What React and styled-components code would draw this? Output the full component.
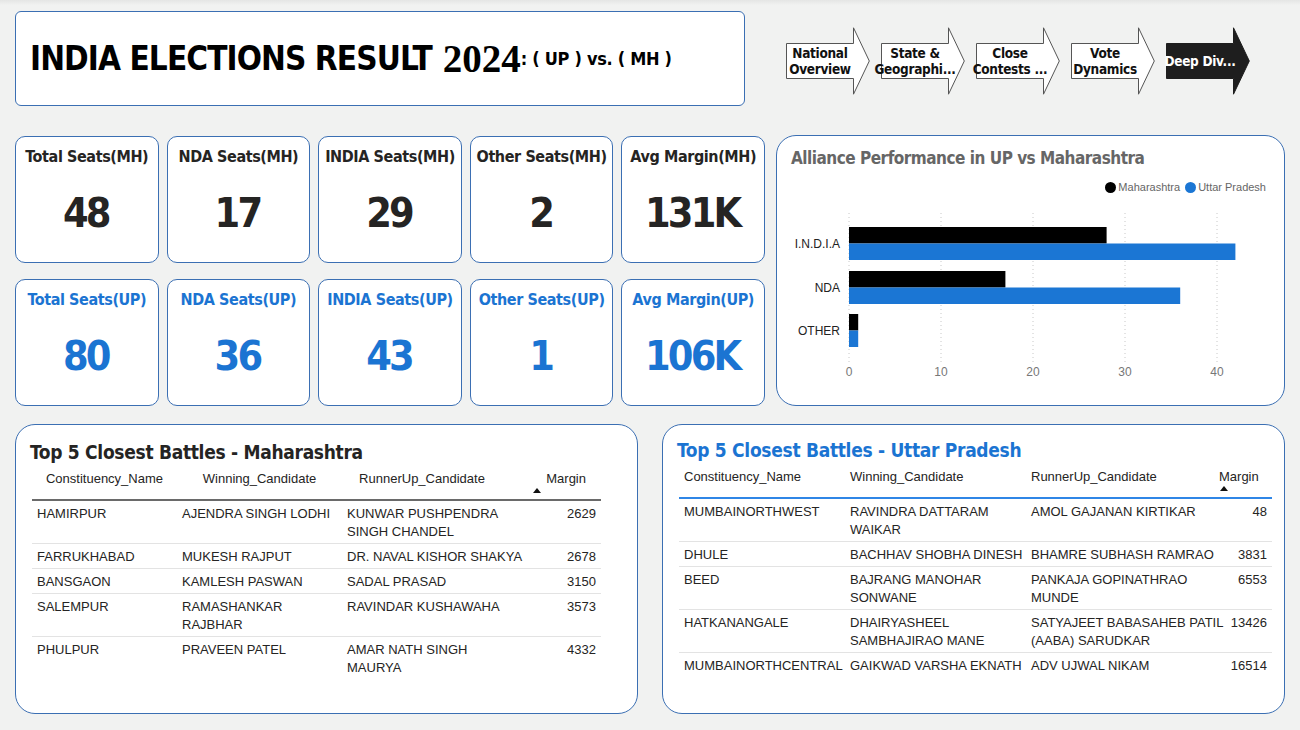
import React from 'react';
import styled, { createGlobalStyle } from 'styled-components';

const BLUE = '#1b74d2';
const BORDER = '#3b6fb3';
const INK = '#252423';
const COND = '"DejaVu Sans Condensed", "DejaVu Sans", sans-serif';
const SANS = '"Liberation Sans", Arial, sans-serif';

const Global = createGlobalStyle`
  html, body { margin: 0; padding: 0; }
  body {
    background: linear-gradient(#e4e5e4 0px, #f1f2f1 5px, #f1f2f1 100%);
    font-family: ${SANS};
    color: ${INK};
  }
  * { box-sizing: border-box; }
`;

const Page = styled.div`
  width: 1300px;
  height: 730px;
  padding: 11px 15px 0 15px;
  display: flex;
  flex-direction: column;
`;

const TopRow = styled.div`
  display: flex;
  align-items: flex-start;
  height: 95px;
`;

const TitleCard = styled.div`
  width: 730px;
  height: 95px;
  background: #fff;
  border: 1px solid ${BORDER};
  border-radius: 6px;
  display: flex;
  align-items: center;
  padding-left: 14px;
  white-space: nowrap;
`;

const TitleMain = styled.span`
  font-family: ${COND};
  font-weight: 700;
  font-size: 33px;
  letter-spacing: -0.9px;
  color: #000;
`;

const TitleYear = styled.span`
  font-family: "Liberation Serif", serif;
  font-weight: 700;
  font-size: 39px;
  color: #000;
  margin-left: 11px;
`;

const TitleSub = styled.span`
  font-family: ${COND};
  font-weight: 700;
  font-size: 18px;
  letter-spacing: -0.3px;
  color: #000;
`;

const Nav = styled.div`
  display: flex;
  gap: 11px;
  margin-left: 41px;
  margin-top: 16px;
`;

const ArrowWrap = styled.div`
  position: relative;
  width: 84px;
  height: 68px;
  flex: none;
`;

const ArrowShape = styled.svg`
  position: absolute;
  inset: 0;
`;

const ArrowLabel = styled.div`
  position: relative;
  margin-top: 16px;
  width: 68px;
  height: 36px;
  display: flex;
  align-items: center;
  justify-content: center;
  text-align: center;
  font-family: ${COND};
  font-weight: 700;
  font-size: 13.5px;
  letter-spacing: -0.3px;
  line-height: 16px;
  color: ${(p) => (p.$active ? '#fff' : '#111')};
  white-space: nowrap;
`;

const NavArrow = ({ lines, active }) => (
  <ArrowWrap>
    <ArrowShape width="84" height="68" viewBox="0 0 84 68">
      <polygon
        points="0.5,16.5 67.5,16.5 67.5,0.8 83.3,34 67.5,67.2 67.5,51.5 0.5,51.5"
        fill={active ? '#1e1e1e' : '#fff'}
        stroke={active ? '#1e1e1e' : '#555'}
        strokeWidth="1"
      />
    </ArrowShape>
    <ArrowLabel $active={active}>
      <div>
        {lines.map((l, i) => (
          <div key={i}>{l}</div>
        ))}
      </div>
    </ArrowLabel>
  </ArrowWrap>
);

const MidRow = styled.div`
  display: flex;
  gap: 11px;
  margin-top: 29px;
  height: 271px;
`;

const KpiGrid = styled.div`
  width: 750px;
  flex: none;
  display: grid;
  grid-template-columns: repeat(5, minmax(0, 1fr));
  grid-template-rows: 127px 127px;
  column-gap: 8px;
  row-gap: 16px;
  padding-top: 1px;
`;

const Kpi = styled.div`
  background: #fff;
  border: 1px solid ${BORDER};
  border-radius: 10px;
  display: flex;
  flex-direction: column;
  align-items: center;
  padding-top: 10px;
  color: ${(p) => (p.$up ? BLUE : INK)};
`;

const KpiLabel = styled.div`
  font-family: ${COND};
  font-weight: 700;
  font-size: 16px;
  letter-spacing: -0.4px;
  line-height: 20px;
  white-space: nowrap;
`;

const KpiValue = styled.div`
  font-family: ${COND};
  font-weight: 700;
  font-size: 41px;
  letter-spacing: -2.8px;
  line-height: 48px;
  margin-top: 22px;
  padding-right: 2px;
`;

const ChartCard = styled.div`
  width: 509px;
  height: 271px;
  flex: none;
  background: #fff;
  border: 1px solid ${BORDER};
  border-radius: 20px;
  display: flex;
  flex-direction: column;
  padding-top: 10px;
`;

const ChartTitle = styled.div`
  font-family: ${COND};
  font-weight: 700;
  font-size: 17px;
  letter-spacing: -0.5px;
  line-height: 24px;
  color: #666;
  padding-left: 14px;
`;

const Legend = styled.div`
  display: flex;
  justify-content: flex-end;
  gap: 5px;
  padding-right: 18px;
  margin-top: 10px;
  height: 14px;
  font-size: 11px;
  line-height: 14px;
  color: #666;
`;

const LegendItem = styled.div`
  display: flex;
  align-items: center;
  gap: 2px;
  &::before {
    content: '';
    width: 11px;
    height: 11px;
    border-radius: 50%;
    background: ${(p) => p.$color};
  }
`;

const BottomRow = styled.div`
  display: flex;
  gap: 24px;
  margin-top: 18px;
`;

const TableCard = styled.div`
  width: 624px;
  height: 290px;
  background: #fff;
  border: 1px solid ${BORDER};
  border-radius: 20px;
  padding: ${(p) => (p.$up ? '12px 0 0 14px' : '14px 0 0 14px')};
`;

const TableTitle = styled.div`
  font-family: ${COND};
  font-weight: 700;
  font-size: 19px;
  letter-spacing: -0.3px;
  line-height: 26px;
  color: ${(p) => (p.$up ? BLUE : INK)};
`;

const Table = styled.table`
  width: ${(p) => p.$width}px;
  border-collapse: collapse;
  table-layout: fixed;
  margin-left: 2px;
  font-family: ${SANS};
  font-size: 13px;
  line-height: 18px;
  color: ${INK};
`;

const Th = styled.th`
  position: relative;
  font-weight: 400;
  text-align: ${(p) => p.$align || 'center'};
  padding: 5px 5px 11px 5px;
  vertical-align: top;
  white-space: nowrap;
  border-bottom: 2px solid ${(p) => (p.$up ? '#2f86e6' : '#6a6a6a')};
`;

const SortMark = styled.span`
  position: absolute;
  left: ${(p) => p.$left}px;
  bottom: 6px;
  width: 0;
  height: 0;
  border-left: 4px solid transparent;
  border-right: 4px solid transparent;
  border-bottom: 5px solid #111;
`;

const Td = styled.td`
  padding: 4px 5px 2px 5px;
  vertical-align: top;
  white-space: nowrap;
  text-align: ${(p) => (p.$num ? 'right' : 'left')};
`;

const Tr = styled.tr`
  border-bottom: 1px solid ${(p) => (p.$last ? 'transparent' : '#e3e3e3')};
`;

const Lines = ({ v }) =>
  v.split('|').map((l, i, a) => (
    <React.Fragment key={i}>
      {l}
      {i < a.length - 1 && <br />}
    </React.Fragment>
  ));

const mhRows = [
  ['HAMIRPUR', 'AJENDRA SINGH LODHI', 'KUNWAR PUSHPENDRA|SINGH CHANDEL', '2629'],
  ['FARRUKHABAD', 'MUKESH RAJPUT', 'DR. NAVAL KISHOR SHAKYA', '2678'],
  ['BANSGAON', 'KAMLESH PASWAN', 'SADAL PRASAD', '3150'],
  ['SALEMPUR', 'RAMASHANKAR|RAJBHAR', 'RAVINDAR KUSHAWAHA', '3573'],
  ['PHULPUR', 'PRAVEEN PATEL', 'AMAR NATH SINGH|MAURYA', '4332'],
];

const upRows = [
  ['MUMBAINORTHWEST', 'RAVINDRA DATTARAM|WAIKAR', 'AMOL GAJANAN KIRTIKAR', '48'],
  ['DHULE', 'BACHHAV SHOBHA DINESH', 'BHAMRE SUBHASH RAMRAO', '3831'],
  ['BEED', 'BAJRANG MANOHAR|SONWANE', 'PANKAJA GOPINATHRAO|MUNDE', '6553'],
  ['HATKANANGALE', 'DHAIRYASHEEL|SAMBHAJIRAO MANE', 'SATYAJEET BABASAHEB PATIL|(AABA) SARUDKAR', '13426'],
  ['MUMBAINORTHCENTRAL', 'GAIKWAD VARSHA EKNATH', 'ADV UJWAL NIKAM', '16514'],
];

const BattleTable = ({ up, rows, widths }) => (
  <Table $width={widths.reduce((a, b) => a + b, 0)}>
    <colgroup>
      {widths.map((w, i) => (
        <col key={i} style={{ width: w }} />
      ))}
    </colgroup>
    <thead>
      <tr>
        <Th $up={up} $align={up ? 'left' : 'center'}>Constituency_Name</Th>
        <Th $up={up} $align={up ? 'left' : 'center'}>Winning_Candidate</Th>
        <Th $up={up} $align={up ? 'left' : 'center'}>RunnerUp_Candidate</Th>
        <Th $up={up} $align={up ? 'left' : 'right'} style={up ? undefined : { paddingRight: 15 }}>
          Margin
          <SortMark $left={up ? 6 : 31} />
        </Th>
      </tr>
    </thead>
    <tbody>
      {rows.map((r, i) => (
        <Tr key={i} $last={i === rows.length - 1}>
          <Td><Lines v={r[0]} /></Td>
          <Td><Lines v={r[1]} /></Td>
          <Td><Lines v={r[2]} /></Td>
          <Td $num>{r[3]}</Td>
        </Tr>
      ))}
    </tbody>
  </Table>
);

const mhKpis = [
  ['Total Seats(MH)', '48'],
  ['NDA Seats(MH)', '17'],
  ['INDIA Seats(MH)', '29'],
  ['Other Seats(MH)', '2'],
  ['Avg Margin(MH)', '131K'],
];
const upKpis = [
  ['Total Seats(UP)', '80'],
  ['NDA Seats(UP)', '36'],
  ['INDIA Seats(UP)', '43'],
  ['Other Seats(UP)', '1'],
  ['Avg Margin(UP)', '106K'],
];

const X0 = 72;
const SC = 9.2;
const bars = [
  { label: 'I.N.D.I.A', mh: 28, up: 42, y: 33 },
  { label: 'NDA', mh: 17, up: 36, y: 77 },
  { label: 'OTHER', mh: 1, up: 1, y: 120 },
];

const Chart = () => (
  <svg width="507" height="192" viewBox="0 0 507 192" style={{ display: 'block' }}>
    {[0, 10, 20, 30, 40].map((t) => (
      <g key={t}>
        <line
          x1={X0 + t * SC}
          x2={X0 + t * SC}
          y1="19"
          y2="168"
          stroke="#c8c8c8"
          strokeWidth="1"
          strokeDasharray="1 3"
        />
        <text
          x={X0 + t * SC}
          y="182"
          textAnchor="middle"
          fontFamily='"Liberation Sans", sans-serif'
          fontSize="12"
          fill="#777"
        >
          {t}
        </text>
      </g>
    ))}
    {bars.map((b) => (
      <g key={b.label}>
        <rect x={X0} y={b.y} width={b.mh * SC} height="16.5" fill="#000" />
        <rect x={X0} y={b.y + 16.5} width={b.up * SC} height="16.5" fill="#1b76d4" />
        <text
          x="63"
          y={b.y + 21}
          textAnchor="end"
          fontFamily='"Liberation Sans", sans-serif'
          fontSize="12"
          fill="#222"
        >
          {b.label}
        </text>
      </g>
    ))}
  </svg>
);

export default function App() {
  return (
    <>
      <Global />
      <Page>
        <TopRow>
          <TitleCard>
            <TitleMain>INDIA ELECTIONS RESULT</TitleMain>
            <TitleYear>2024</TitleYear>
            <TitleSub>: ( UP ) vs. ( MH )</TitleSub>
          </TitleCard>
          <Nav>
            <NavArrow lines={['National', 'Overview']} />
            <NavArrow lines={['State &', 'Geographi...']} />
            <NavArrow lines={['Close', 'Contests ...']} />
            <NavArrow lines={['Vote', 'Dynamics']} />
            <NavArrow lines={['Deep Div...']} active />
          </Nav>
        </TopRow>
        <MidRow>
          <KpiGrid>
            {mhKpis.map(([l, v]) => (
              <Kpi key={l}>
                <KpiLabel>{l}</KpiLabel>
                <KpiValue>{v}</KpiValue>
              </Kpi>
            ))}
            {upKpis.map(([l, v]) => (
              <Kpi key={l} $up>
                <KpiLabel>{l}</KpiLabel>
                <KpiValue>{v}</KpiValue>
              </Kpi>
            ))}
          </KpiGrid>
          <ChartCard>
            <ChartTitle>Alliance Performance in UP vs Maharashtra</ChartTitle>
            <Legend>
              <LegendItem $color="#000">Maharashtra</LegendItem>
              <LegendItem $color="#1b76d4">Uttar Pradesh</LegendItem>
            </Legend>
            <Chart />
          </ChartCard>
        </MidRow>
        <BottomRow>
          <TableCard>
            <TableTitle>Top 5 Closest Battles - Maharashtra</TableTitle>
            <BattleTable rows={mhRows} widths={[145, 165, 160, 99]} />
          </TableCard>
          <TableCard $up>
            <TableTitle $up>Top 5 Closest Battles - Uttar Pradesh</TableTitle>
            <BattleTable up rows={upRows} widths={[166, 181, 188, 58]} />
          </TableCard>
        </BottomRow>
      </Page>
    </>
  );
}
